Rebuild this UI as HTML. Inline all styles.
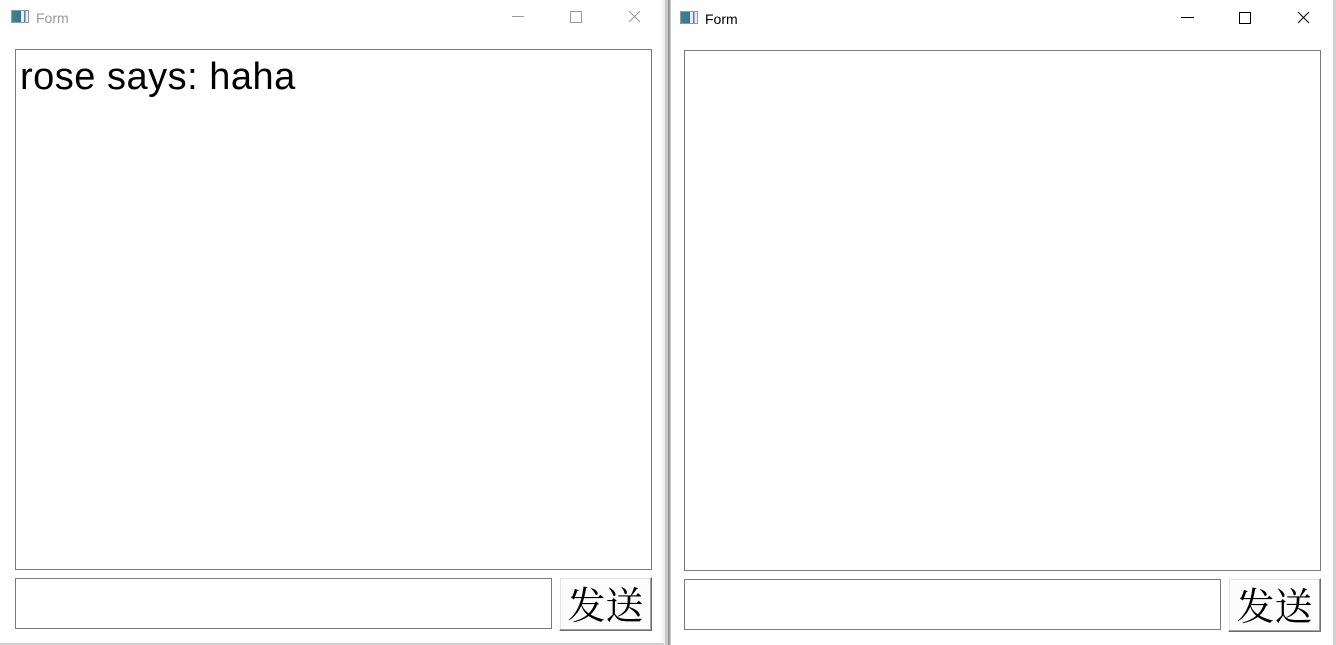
<!DOCTYPE html>
<html><head><meta charset="utf-8"><style>
html,body{margin:0;padding:0;width:1336px;height:645px;overflow:hidden;background:#fff;position:relative;font-family:"Liberation Sans","Noto Sans CJK SC",sans-serif}
.abs{position:absolute;box-sizing:border-box}
.box{border:1px solid #7a7a7a;background:#fff}
.btn{border:1px solid;border-color:#fff #6e6e6e #6e6e6e #fff;background:#fcfcfc;box-shadow:inset -1px -1px 0 #a0a0a0, inset 1px 1px 0 #e3e3e3;font-family:"Noto Serif CJK SC","Noto Sans CJK SC",serif;font-size:38px;line-height:50px;text-align:center;color:#000}
.icon{width:18px;height:13px;border:1px solid #8a9aa6;background:linear-gradient(90deg,#3f8a7a 0,#3a6fa0 55%,#e8eef2 55%,#e8eef2 75%,#5a7f9a 75%,#5a7f9a 85%,#e8eef2 85%)}
.title{font-size:14px}
</style></head><body>
<div class="abs" style="left:664px;top:0;width:7px;height:645px;background:#c9c9c9"></div>
<div class="abs" style="left:668px;top:0;width:2px;height:645px;background:#9a9a9a"></div>
<div class="abs" style="left:660px;top:0;width:5px;height:645px;background:linear-gradient(90deg,#fff,#ececec)"></div>
<div class="abs" style="left:0;top:643px;width:664px;height:2px;background:#cfcfcf"></div>

<div class="abs icon" style="left:11px;top:10px"></div>
<div class="abs title" style="left:36px;top:10px;color:#999">Form</div>
<svg class="abs" style="left:505px;top:8px" width="140" height="20">
<line x1="7" y1="8.5" x2="19" y2="8.5" stroke="#999" stroke-width="1"/>
<rect x="65.5" y="3.5" width="11" height="11" fill="none" stroke="#999"/>
<line x1="124" y1="3" x2="135" y2="14" stroke="#999"/><line x1="135" y1="3" x2="124" y2="14" stroke="#999"/>
</svg>
<div class="abs box" style="left:15px;top:49px;width:637px;height:521px"></div>
<div class="abs" style="left:20px;top:56px;font-size:38px;letter-spacing:0.5px;line-height:42px;color:#000">rose says: haha</div>
<div class="abs box" style="left:15px;top:578px;width:537px;height:51px"></div>
<div class="abs btn" style="left:559px;top:577px;width:93px;height:54px">发送</div>

<div class="abs icon" style="left:680px;top:11px"></div>
<div class="abs title" style="left:705px;top:11px;color:#000">Form</div>
<svg class="abs" style="left:1175px;top:8px" width="140" height="20">
<line x1="6" y1="9.5" x2="19" y2="9.5" stroke="#000" stroke-width="1"/>
<rect x="64.5" y="4.5" width="11" height="11" fill="none" stroke="#000"/>
<line x1="123" y1="4" x2="134" y2="15" stroke="#000"/><line x1="134" y1="4" x2="123" y2="15" stroke="#000"/>
</svg>
<div class="abs box" style="left:684px;top:50px;width:637px;height:521px"></div>
<div class="abs box" style="left:684px;top:579px;width:537px;height:51px"></div>
<div class="abs btn" style="left:1228px;top:578px;width:93px;height:54px">发送</div>
<div class="abs" style="left:1333px;top:0;width:3px;height:645px;background:#d0d0d0"></div>
</body></html>
